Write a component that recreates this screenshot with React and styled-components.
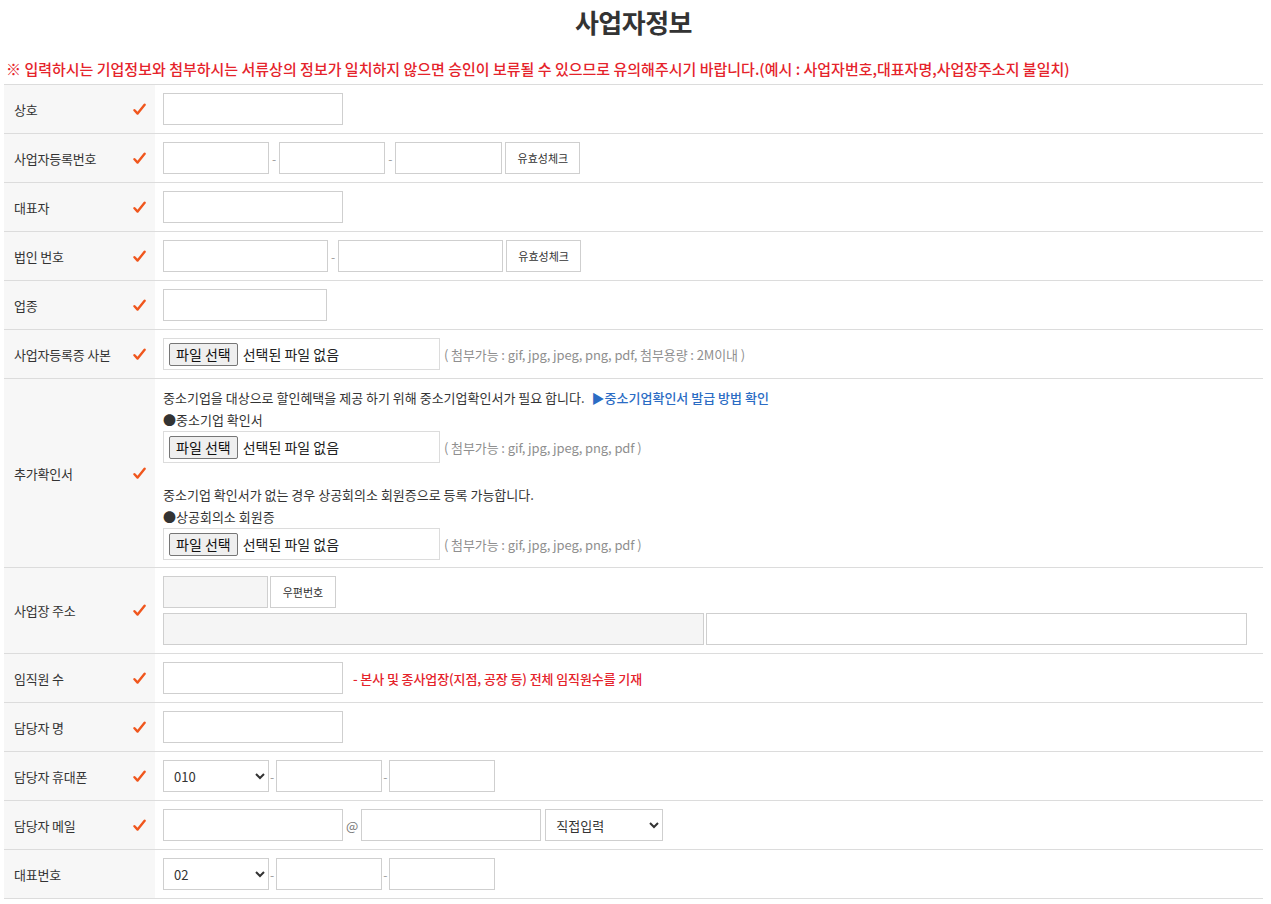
import React from "react";
import styled, { createGlobalStyle } from "styled-components";

const GlobalStyle = createGlobalStyle`
  html, body {
    margin: 0;
    padding: 0;
    background: #fff;
  }
  body {
    font-family: "Noto Sans CJK KR", "Noto Sans", sans-serif;
    color: #333;
  }
  * {
    box-sizing: border-box;
  }
`;

const Page = styled.div`
  padding: 0 8px 0 4px;
`;

const Title = styled.h2`
  margin: 0;
  height: 48px;
  line-height: 44px;
  text-align: center;
  font-size: 26px;
  font-weight: 700;
  color: #333;
  letter-spacing: -0.5px;
`;

const Notice = styled.p`
  margin: 0;
  height: 36px;
  padding: 11px 0 0 2px;
  line-height: 20px;
  font-size: 15px;
  font-weight: 500;
  color: #e5232b;
  letter-spacing: 0;
  white-space: nowrap;
`;

const Table = styled.div`
  border-top: 1px solid #dcdcdc;
`;

const Row = styled.div`
  display: grid;
  grid-template-columns: 151px 1fr;
  border-bottom: 1px solid #dcdcdc;
`;

const Label = styled.div`
  display: flex;
  align-items: center;
  justify-content: space-between;
  padding: 0 9px 0 10px;
  background: #f7f7f7;
  font-size: 13px;
  color: #333;
  letter-spacing: -0.2px;
`;

const Cell = styled.div`
  padding: 8px 8px;
  min-height: 48px;
  display: flex;
  flex-direction: ${(p) => (p.$stack ? "column" : "row")};
  align-items: ${(p) => (p.$stack ? "flex-start" : "center")};
  gap: ${(p) => (p.$stack ? "5px" : "0")};
`;

const Line = styled.div`
  display: flex;
  align-items: center;
`;

const Input = styled.input`
  width: ${(p) => p.$w || 180}px;
  height: 32px;
  border: 1px solid #cfcfcf;
  background: ${(p) => (p.$gray ? "#f5f5f5" : "#fff")};
  padding: 0 8px;
  font-size: 13px;
  font-family: inherit;
  outline: none;
  margin-right: ${(p) => p.$mr || 0}px;
`;

const Select = styled.select`
  width: ${(p) => p.$w || 106}px;
  height: 32px;
  margin-left: ${(p) => p.$ml || 0}px;
  border: 1px solid #cfcfcf;
  background: #fff;
  padding: 0 6px;
  font-size: 13px;
  font-family: "Noto Sans CJK KR", sans-serif;
  color: #333;
  outline: none;
`;

const Dash = styled.span`
  display: inline-block;
  font-size: 12px;
  color: #999;
  margin: ${(p) => p.$m || "0 3px"};
`;

const At = styled.span`
  font-size: 13px;
  color: #777;
  margin: 0 3px 0 3px;
`;

const SmallButton = styled.button`
  height: 32px;
  width: ${(p) => p.$w || 75}px;
  margin-left: ${(p) => p.$ml || 3}px;
  border: 1px solid #cfcfcf;
  background: #fff;
  font-size: 11px;
  font-family: "Noto Sans CJK KR", sans-serif;
  color: #333;
  padding: 0;
  cursor: pointer;
`;

const FileBox = styled.label`
  display: flex;
  align-items: center;
  width: 277px;
  height: 32px;
  border: 1px solid #dcdcdc;
  padding: 0 5px;
  font-size: 14px;
  color: #222;
  cursor: pointer;
  input {
    display: none;
  }
`;

const FileButton = styled.span`
  display: inline-flex;
  align-items: center;
  height: 23px;
  padding: 0 6px;
  margin-right: 5px;
  border: 1px solid #767676;
  border-radius: 2px;
  background: #efefef;
  font-size: 14px;
  color: #111;
`;

const Hint = styled.span`
  margin-left: 4px;
  font-size: 13px;
  color: #8f8f8f;
  letter-spacing: -0.1px;
`;

const RedNote = styled.span`
  margin-left: 10px;
  font-size: 13px;
  font-weight: 500;
  color: #e5232b;
  letter-spacing: -0.1px;
`;

const Text = styled.div`
  font-size: 13px;
  line-height: 22px;
  color: #333;
  letter-spacing: 0;
  margin-top: ${(p) => p.$mt || 0}px;
`;

const Link = styled.a`
  margin-left: 7px;
  color: #2b6cc4;
  font-weight: 500;
  text-decoration: none;
`;

const StackCell = styled.div`
  padding: 8px 8px 7px;
  display: flex;
  flex-direction: column;
  align-items: flex-start;
`;

function Check() {
  return (
    <svg width="13" height="13" viewBox="0 0 13 13">
      <path
        d="M1.5 7.2 L4.6 10.6 L11.6 1.8"
        fill="none"
        stroke="#f0561d"
        strokeWidth="2.4"
        strokeLinecap="round"
        strokeLinejoin="round"
      />
    </svg>
  );
}

function FieldLabel({ children, required = true }) {
  return (
    <Label>
      <span>{children}</span>
      {required && <Check />}
    </Label>
  );
}

function FileField({ hint }) {
  return (
    <Line>
      <FileBox>
        <input type="file" />
        <FileButton>파일 선택</FileButton>
        선택된 파일 없음
      </FileBox>
      <Hint>{hint}</Hint>
    </Line>
  );
}

export default function App() {
  return (
    <Page>
      <GlobalStyle />
      <Title>사업자정보</Title>
      <Notice>
        ※ 입력하시는 기업정보와 첨부하시는 서류상의 정보가 일치하지 않으면 승인이 보류될 수 있으므로 유의해주시기 바랍니다.(예시 : 사업자번호,대표자명,사업장주소지 불일치)
      </Notice>
      <Table>
        <Row>
          <FieldLabel>상호</FieldLabel>
          <Cell>
            <Input $w={180} />
          </Cell>
        </Row>
        <Row>
          <FieldLabel>사업자등록번호</FieldLabel>
          <Cell>
            <Input $w={106} />
            <Dash>-</Dash>
            <Input $w={106} />
            <Dash>-</Dash>
            <Input $w={107} />
            <SmallButton>유효성체크</SmallButton>
          </Cell>
        </Row>
        <Row>
          <FieldLabel>대표자</FieldLabel>
          <Cell>
            <Input $w={180} />
          </Cell>
        </Row>
        <Row>
          <FieldLabel>법인 번호</FieldLabel>
          <Cell>
            <Input $w={165} />
            <Dash>-</Dash>
            <Input $w={165} />
            <SmallButton>유효성체크</SmallButton>
          </Cell>
        </Row>
        <Row>
          <FieldLabel>업종</FieldLabel>
          <Cell>
            <Input $w={164} />
          </Cell>
        </Row>
        <Row>
          <FieldLabel>사업자등록증 사본</FieldLabel>
          <Cell>
            <FileField hint="( 첨부가능 : gif, jpg, jpeg, png, pdf, 첨부용량 : 2M이내 )" />
          </Cell>
        </Row>
        <Row>
          <FieldLabel>추가확인서</FieldLabel>
          <StackCell>
            <Text>
              중소기업을 대상으로 할인혜택을 제공 하기 위해 중소기업확인서가 필요 합니다.
              <Link href="#">▶중소기업확인서 발급 방법 확인</Link>
            </Text>
            <Text>●중소기업 확인서</Text>
            <FileField hint="( 첨부가능 : gif, jpg, jpeg, png, pdf )" />
            <Text $mt={21}>중소기업 확인서가 없는 경우 상공회의소 회원증으로 등록 가능합니다.</Text>
            <Text>●상공회의소 회원증</Text>
            <FileField hint="( 첨부가능 : gif, jpg, jpeg, png, pdf )" />
          </StackCell>
        </Row>
        <Row>
          <FieldLabel>사업장 주소</FieldLabel>
          <Cell $stack>
            <Line>
              <Input $w={105} $gray disabled />
              <SmallButton $w={66} $ml={2}>우편번호</SmallButton>
            </Line>
            <Line>
              <Input $w={541} $gray disabled $mr={2} />
              <Input $w={541} />
            </Line>
          </Cell>
        </Row>
        <Row>
          <FieldLabel>임직원 수</FieldLabel>
          <Cell>
            <Input $w={180} />
            <RedNote>- 본사 및 종사업장(지점, 공장 등) 전체 임직원수를 기재</RedNote>
          </Cell>
        </Row>
        <Row>
          <FieldLabel>담당자 명</FieldLabel>
          <Cell>
            <Input $w={180} />
          </Cell>
        </Row>
        <Row>
          <FieldLabel>담당자 휴대폰</FieldLabel>
          <Cell>
            <Select $w={106} defaultValue="010">
              <option>010</option>
              <option>011</option>
              <option>016</option>
              <option>017</option>
              <option>019</option>
            </Select>
            <Dash $m="0 2px 0 1px">-</Dash>
            <Input $w={106} />
            <Dash $m="0 2px 0 1px">-</Dash>
            <Input $w={106} />
          </Cell>
        </Row>
        <Row>
          <FieldLabel>담당자 메일</FieldLabel>
          <Cell>
            <Input $w={180} />
            <At>@</At>
            <Input $w={180} />
            <Select $w={118} $ml={4} defaultValue="직접입력">
              <option>직접입력</option>
              <option>naver.com</option>
              <option>gmail.com</option>
              <option>daum.net</option>
            </Select>
          </Cell>
        </Row>
        <Row>
          <FieldLabel required={false}>대표번호</FieldLabel>
          <Cell>
            <Select $w={106} defaultValue="02">
              <option>02</option>
              <option>031</option>
              <option>032</option>
              <option>051</option>
            </Select>
            <Dash $m="0 2px 0 1px">-</Dash>
            <Input $w={106} />
            <Dash $m="0 2px 0 1px">-</Dash>
            <Input $w={106} />
          </Cell>
        </Row>
      </Table>
    </Page>
  );
}
